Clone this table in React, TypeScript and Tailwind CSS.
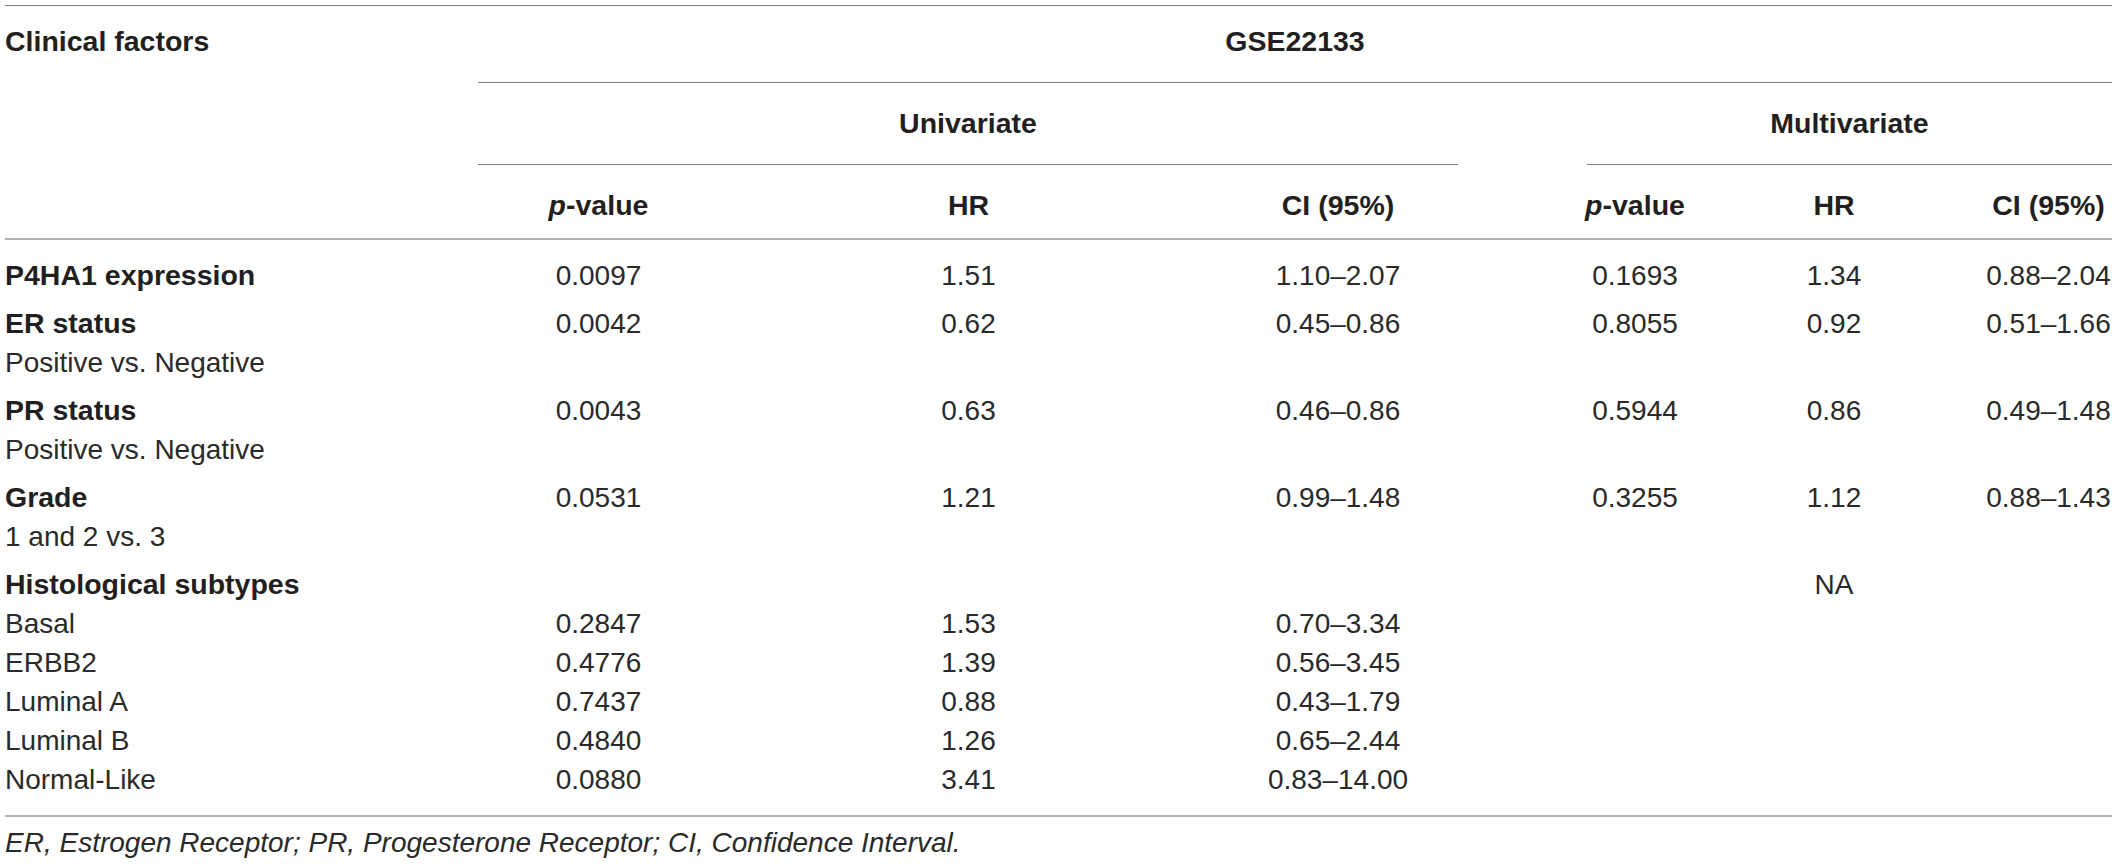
import React from 'react';

type Line = {
  label: string;
  bold?: boolean;
  uni?: [string, string, string];
  multi?: [string, string, string];
  gap?: 'first' | 'group';
};

const lines: Line[] = [
  {
    label: 'P4HA1 expression',
    bold: true,
    uni: ['0.0097', '1.51', '1.10–2.07'],
    multi: ['0.1693', '1.34', '0.88–2.04'],
    gap: 'first',
  },
  {
    label: 'ER status',
    bold: true,
    uni: ['0.0042', '0.62', '0.45–0.86'],
    multi: ['0.8055', '0.92', '0.51–1.66'],
    gap: 'group',
  },
  { label: 'Positive vs. Negative' },
  {
    label: 'PR status',
    bold: true,
    uni: ['0.0043', '0.63', '0.46–0.86'],
    multi: ['0.5944', '0.86', '0.49–1.48'],
    gap: 'group',
  },
  { label: 'Positive vs. Negative' },
  {
    label: 'Grade',
    bold: true,
    uni: ['0.0531', '1.21', '0.99–1.48'],
    multi: ['0.3255', '1.12', '0.88–1.43'],
    gap: 'group',
  },
  { label: '1 and 2 vs. 3' },
  { label: 'Histological subtypes', bold: true, multi: ['', 'NA', ''], gap: 'group' },
  { label: 'Basal', uni: ['0.2847', '1.53', '0.70–3.34'] },
  { label: 'ERBB2', uni: ['0.4776', '1.39', '0.56–3.45'] },
  { label: 'Luminal A', uni: ['0.7437', '0.88', '0.43–1.79'] },
  { label: 'Luminal B', uni: ['0.4840', '1.26', '0.65–2.44'] },
  { label: 'Normal-Like', uni: ['0.0880', '3.41', '0.83–14.00'] },
];

const grid = 'grid grid-cols-[473px_241px_499px_240px_129px_96px_302px_127px]';

const Cell: React.FC<{ children?: React.ReactNode }> = ({ children }) => (
  <div className="flex justify-center whitespace-nowrap">{children}</div>
);

export default function App() {
  return (
    <div className="min-h-screen bg-white pt-[5px] pl-[5px] font-['Liberation_Sans',Arial,sans-serif] text-[#231f20]">
      <div className="w-[2107px] border-t border-[#808080]">
        {/* Header */}
        <div className={`${grid} text-[28.5px] font-bold leading-[39px]`}>
          <div className="col-start-1 row-start-1 row-span-3 border-b-2 border-[#b3b3b3] pt-[16px] whitespace-nowrap">
            Clinical factors
          </div>
          <div className="col-start-2 col-span-7 row-start-1 border-b border-[#808080] pt-[16px] pb-[21px] text-center">
            GSE22133
          </div>
          <div className="col-start-2 col-span-3 row-start-2 border-b border-[#808080] pt-[21px] pb-[21px] text-center">
            Univariate
          </div>
          <div className="col-start-6 col-span-3 row-start-2 border-b border-[#808080] pt-[21px] pb-[21px] text-center">
            Multivariate
          </div>
          {['p', 'HR', 'CI (95%)', '', 'p', 'HR', 'CI (95%)'].map((h, i) => (
            <div key={i} className="row-start-3 border-b-2 border-[#b3b3b3] pt-[21px] pb-[13px]">
              <Cell>
                {h === 'p' ? (
                  <span>
                    <i>p</i>-value
                  </span>
                ) : (
                  h
                )}
              </Cell>
            </div>
          ))}
        </div>

        {/* Body */}
        <div className="border-b-2 border-[#b3b3b3] pb-[16px] text-[28px] leading-[39px]">
          {lines.map((line, i) => {
            const uni = line.uni ?? ['', '', ''];
            const multi = line.multi ?? ['', '', ''];
            return (
              <div
                key={i}
                className={`${grid} ${
                  line.gap === 'first' ? 'pt-[16px]' : line.gap === 'group' ? 'pt-[9px]' : ''
                }`}
              >
                <div className={`whitespace-nowrap ${line.bold ? 'text-[28.5px] font-bold' : 'text-[#2a2a2a]'}`}>
                  {line.label}
                </div>
                {uni.map((v, j) => (
                  <Cell key={`u${j}`}>
                    <span className="text-[#2a2a2a]">{v}</span>
                  </Cell>
                ))}
                <div />
                {multi.map((v, j) => (
                  <Cell key={`m${j}`}>
                    <span className="text-[#2a2a2a]">{v}</span>
                  </Cell>
                ))}
              </div>
            );
          })}
        </div>

        {/* Footnote */}
        <p className="pt-[6px] text-[28px] italic leading-[39px] text-[#2a2a2a]">
          ER, Estrogen Receptor; PR, Progesterone Receptor; CI, Confidence Interval.
        </p>
      </div>
    </div>
  );
}
